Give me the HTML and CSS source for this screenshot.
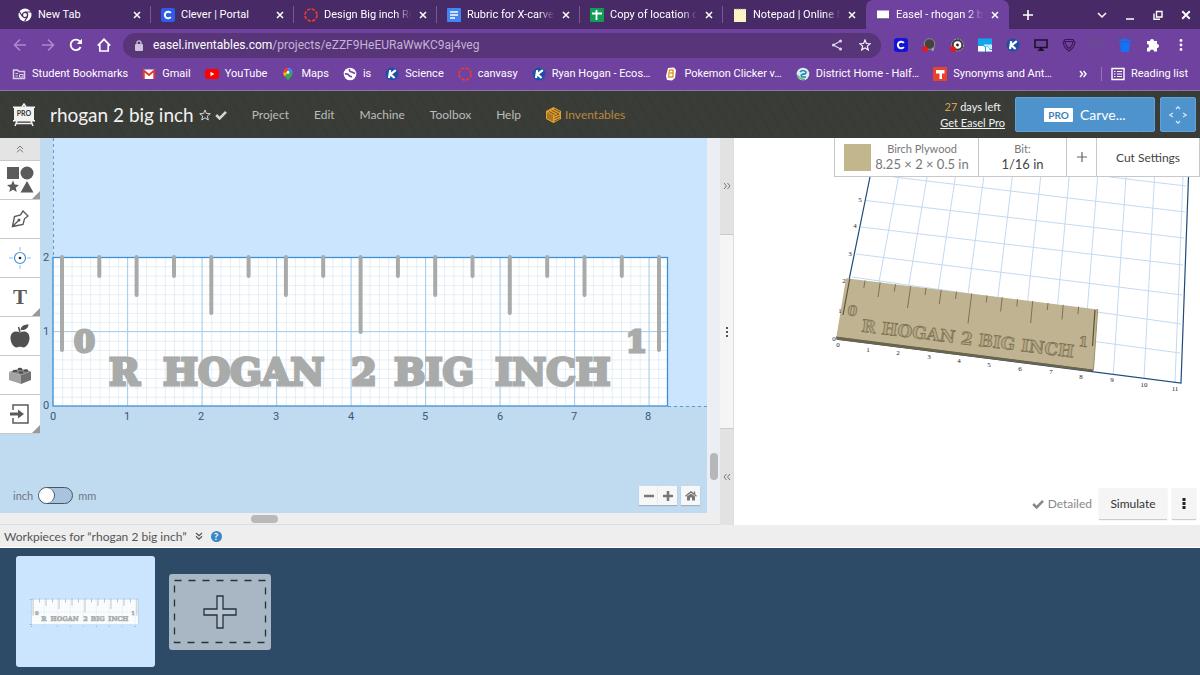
FILE: index.html
```html
<!DOCTYPE html>
<html lang="en">
<head>
    <meta charset="UTF-8">
    <meta name="viewport" content="width=device-width, initial-scale=1.0">
    <title>Easel - rhogan 2 big inch</title>
    <link rel="stylesheet" href="styles.css">
</head>
<body>

<!-- shared icons -->
<svg class="sprite" width="0" height="0" aria-hidden="true">
    <symbol id="i-close" viewBox="0 0 8 8"><path d="M1 1l6 6M7 1L1 7" stroke="#fff" stroke-width="1.5"/></symbol>
    <symbol id="i-k" viewBox="0 0 14 14"><circle cx="7" cy="7" r="6.5" fill="#1d4fa5"/><path d="M5.2 3.2L4 11M10.8 3.2L5.4 7.4L9.6 11" stroke="#fff" stroke-width="2.2" fill="none"/></symbol>
    <symbol id="i-canvas" viewBox="0 0 14 14"><circle cx="7" cy="7" r="6" fill="none" stroke="#e23c35" stroke-width="1.8" stroke-dasharray="3.3 1.4"/></symbol>
    <symbol id="i-c" viewBox="0 0 14 14"><rect width="14" height="14" rx="2" fill="#2f5bea"/><path d="M9.8 5A3.3 3.3 0 1 0 9.8 9" fill="none" stroke="#fff" stroke-width="2"/></symbol>
    <symbol id="i-check" viewBox="0 0 12 10"><path d="M1.2 5L4.6 8.4L11 1.8" fill="none" stroke="currentColor" stroke-width="2.6"/></symbol>
</svg>

<header class="tabs">
    <div class="tab">
        <svg class="fav" viewBox="0 0 14 14"><circle cx="7" cy="7" r="6.5" fill="#fff"/><circle cx="7" cy="7" r="2.6" fill="#fff" stroke="#472a66" stroke-width="1.3"/><path d="M7 4H13M4.4 8.5L1.4 3.6M9.6 8.5L6.6 13.4" stroke="#472a66" stroke-width="1.1"/></svg>
        <span class="tab-title">New Tab</span>
        <button class="tab-close" aria-label="Close"><svg><use href="#i-close"/></svg></button>
    </div>
    <div class="tab">
        <svg class="fav"><use href="#i-c"/></svg>
        <span class="tab-title">Clever | Portal</span>
        <button class="tab-close" aria-label="Close"><svg><use href="#i-close"/></svg></button>
    </div>
    <div class="tab">
        <svg class="fav"><use href="#i-canvas"/></svg>
        <span class="tab-title">Design Big inch Ru</span>
        <button class="tab-close" aria-label="Close"><svg><use href="#i-close"/></svg></button>
    </div>
    <div class="tab">
        <svg class="fav" viewBox="0 0 14 14"><rect width="14" height="14" rx="1" fill="#4285f4"/><path d="M3 4H11M3 7H11M3 10H8" stroke="#fff" stroke-width="1.5"/></svg>
        <span class="tab-title">Rubric for X-carve</span>
        <button class="tab-close" aria-label="Close"><svg><use href="#i-close"/></svg></button>
    </div>
    <div class="tab">
        <svg class="fav" viewBox="0 0 14 14"><rect width="14" height="14" rx="1" fill="#109d58"/><path d="M2 5.5H12M6.5 2V12" stroke="#fff" stroke-width="1.8"/></svg>
        <span class="tab-title">Copy of location o</span>
        <button class="tab-close" aria-label="Close"><svg><use href="#i-close"/></svg></button>
    </div>
    <div class="tab">
        <svg class="fav" viewBox="0 0 14 14"><rect x="1" y="1" width="12" height="13" fill="#fbf3c4"/><path d="M1 1H13" stroke="#8d8672" stroke-dasharray="1 1"/></svg>
        <span class="tab-title">Notepad | Online N</span>
        <button class="tab-close" aria-label="Close"><svg><use href="#i-close"/></svg></button>
    </div>
    <div class="tab active">
        <svg class="fav" viewBox="0 0 14 14"><path d="M1 2.5H13V10.5H1Z" fill="#fff"/><path d="M1 11H13" stroke="#55505a"/></svg>
        <span class="tab-title">Easel - rhogan 2 b</span>
        <button class="tab-close" aria-label="Close"><svg><use href="#i-close"/></svg></button>
    </div>
    <button class="new-tab" aria-label="New tab"><svg width="12" height="12" viewBox="0 0 12 12"><path d="M6 1V11M1 6H11" stroke="#fff" stroke-width="1.6"/></svg></button>
    <div class="window-buttons">
        <button aria-label="Search tabs"><svg width="10" height="10" viewBox="0 0 10 10"><path d="M1 3L5 7L9 3" fill="none" stroke="#fff" stroke-width="1.5"/></svg></button>
        <button aria-label="Minimize"><svg width="10" height="10" viewBox="0 0 10 10"><path d="M1 9H9" stroke="#fff" stroke-width="1.5"/></svg></button>
        <button aria-label="Restore"><svg width="10" height="10" viewBox="0 0 10 10"><path d="M3.5 1.5H9V7H3.5ZM1 3.5V9.3H7" fill="none" stroke="#fff" stroke-width="1.4"/></svg></button>
        <button aria-label="Close window"><svg width="10" height="10"><use href="#i-close"/></svg></button>
    </div>
</header>

<div class="toolbar">
    <button aria-label="Back"><svg width="14" height="14" viewBox="0 0 14 14"><path d="M13 7H2M7 1.5L1.5 7L7 12.5" fill="none" stroke="#ab8bcb" stroke-width="1.5"/></svg></button>
    <button aria-label="Forward"><svg width="14" height="14" viewBox="0 0 14 14"><path d="M1 7H12M7 1.5L12.5 7L7 12.5" fill="none" stroke="#ab8bcb" stroke-width="1.5"/></svg></button>
    <button aria-label="Reload"><svg width="14" height="14" viewBox="0 0 14 14"><path d="M11.6 9A5.2 5.2 0 1 1 10.8 3.4" fill="none" stroke="#fff" stroke-width="1.8"/><path d="M13 .8V6H7.8Z" fill="#fff"/></svg></button>
    <button aria-label="Home"><svg width="14" height="14" viewBox="0 0 14 14"><path d="M.8 7.6L7 1.3L13.2 7.6M2.8 6.5V13H11.2V6.5" fill="none" stroke="#fff" stroke-width="1.7"/></svg></button>
    <div class="omnibox">
        <svg width="8" height="11" viewBox="0 0 8 11"><rect y="4" width="8" height="7" rx="1" fill="#cfc3dc"/><path d="M2 4V2.8A2 2 0 0 1 6 2.8V4" fill="none" stroke="#cfc3dc" stroke-width="1.3"/></svg>
        <span class="url">easel.inventables.com<span class="path">/projects/eZZF9HeEURaWwKC9aj4veg</span></span>
        <button aria-label="Share"><svg width="12" height="12" viewBox="0 0 12 12"><path d="M9.5 2L2.5 6L9.5 10" fill="none" stroke="#e2d8ec" stroke-width="1.2"/><circle cx="9.5" cy="2" r="1.5" fill="#e2d8ec"/><circle cx="2.5" cy="6" r="1.5" fill="#e2d8ec"/><circle cx="9.5" cy="10" r="1.5" fill="#e2d8ec"/></svg></button>
        <button aria-label="Bookmark"><svg width="12" height="12" viewBox="0 0 12 12"><path d="M6 1L7.4 4.5L11.3 4.7L8.3 7.1L9.3 11L6 8.8L2.7 11L3.7 7.1L.7 4.7L4.6 4.5Z" fill="none" stroke="#fff" stroke-width="1.1"/></svg></button>
    </div>
    <div class="extensions">
        <svg width="14" height="14" viewBox="0 0 14 14"><rect width="14" height="14" rx="3" fill="#1414d8"/><path d="M9.8 5A3.3 3.3 0 1 0 9.8 9" fill="none" stroke="#fff" stroke-width="2"/></svg>
        <svg width="14" height="14" viewBox="0 0 14 14"><path d="M8 10L11 13.5L12.500 9Z" fill="#b5b1ae"/><circle cx="7.500" cy="6" r="5.3" fill="#45433f" stroke="#8d8a86"/><circle cx="3" cy="11" r="2.8" fill="#f01414"/></svg>
        <svg width="14" height="14" viewBox="0 0 14 14"><circle cx="7.5" cy="7" r="6" fill="#3d3b40" stroke="#aaa59a" stroke-dasharray="2 1"/><circle cx="7.5" cy="7" r="3.8" fill="#fff"/><circle cx="7.5" cy="7" r="1.4" fill="#222"/><circle cx="3" cy="11" r="2.8" fill="#f01414"/></svg>
        <svg width="14" height="14" viewBox="0 0 14 14"><path d="M0 .5H14V13.500H0Z" fill="#12a5ee"/><path d="M0 8H5.5L7 9.500V13.500H0ZM8 9H10L12 12H14V13.500H8Z" fill="#fff"/><path d="M5.5 6.500H14V11H12L10 8.500H7Z" fill="#c9ecfd"/></svg>
        <svg width="14" height="14"><use href="#i-k"/></svg>
        <svg width="14" height="14" viewBox="0 0 14 14"><path d="M1 2H13V9.5H1Z" fill="none" stroke="#1d1126" stroke-width="1.6"/><path d="M5.500 9.500H8.500V11.500H10V13H4V11.500H5.500Z" fill="#1d1126"/></svg>
        <svg width="14" height="14" viewBox="0 0 14 14"><path d="M3 1.5H11L13 4.5Q12 10 7 13Q2 10 1 4.5ZM3 3.5H11Q10.5 8 7 10.5Q3.500 8 3 3.5Z" fill="none" stroke="#35184f" stroke-width="1.1"/></svg>
        <svg width="14" height="14" viewBox="0 0 14 14"><path d="M3 1.5H11L13 4.5Q12 10 7 13Q2 10 1 4.5ZM3 3.5H11Q10.5 8 7 10.5Q3.500 8 3 3.5Z" fill="none" stroke="#615384" stroke-width=".9"/></svg>
        <svg width="14" height="14" viewBox="0 0 14 14"><path d="M1 1.5H5V.5H9V1.5H13V3.5H1ZM2 4.500H12L11 14H3Z" fill="#1173f5"/></svg>
        <svg width="14" height="14" viewBox="0 0 14 14"><path d="M1 3H4A2 2 0 1 1 8 3H11V6A2 2 0 1 1 11 10V13.5H8A2 2 0 0 0 4 13.5H1V10A2 2 0 0 0 1 6Z" fill="#fff"/></svg>
        <svg width="14" height="14" viewBox="0 0 14 14"><circle cx="7" cy="2.5" r="1.4" fill="#fff"/><circle cx="7" cy="7" r="1.4" fill="#fff"/><circle cx="7" cy="11.5" r="1.4" fill="#fff"/></svg>
    </div>
</div>

<nav class="bookmarks">
    <a href="#"><svg viewBox="0 0 14 14"><path d="M1.5 3H5.5L7 4.5H12.5V11.5H1.5Z" fill="none" stroke="#d9cfe3" stroke-width="1.5"/><path d="M3.5 6.5H6M3.5 9H6M7.5 7.5H11V10H7.5Z" stroke="#d9cfe3" fill="none"/></svg>Student Bookmarks</a>
    <a href="#"><svg viewBox="0 0 14 14"><path d="M1 2.5H13V12H1Z" fill="#fff"/><path d="M1.8 12V3.5L7 8L12.2 3.5V12" fill="none" stroke="#df3b30" stroke-width="1.9"/></svg>Gmail</a>
    <a href="#"><svg viewBox="0 0 14 14"><rect y="2" width="14" height="10" rx="2.5" fill="#f00"/><path d="M5.5 4.8L9.3 7L5.5 9.2Z" fill="#fff"/></svg>YouTube</a>
    <a href="#"><svg viewBox="0 0 14 14"><path d="M7 .8A4.8 4.8 0 0 0 2.2 5.5L7 5.5Z" fill="#ea4335"/><path d="M7 .8A4.8 4.8 0 0 1 11.8 5.5H7Z" fill="#4285f4"/><path d="M2.2 5.5H7L4 9.8Q2.2 7.5 2.2 5.5Z" fill="#fbbc04"/><path d="M7 5.5H11.8Q11.8 8.5 7 13.3L4 9.8Z" fill="#34a853"/><circle cx="7" cy="5.4" r="1.4" fill="#fff"/></svg>Maps</a>
    <a href="#"><svg viewBox="0 0 14 14"><circle cx="7" cy="7" r="6.3" fill="#fff"/><path d="M2 7Q5 6.500 6 8.5Q7 10 9 9.500M6.500 2Q6 5 9 5L12 6.500" fill="none" stroke="#6f42a0" stroke-width="1.6"/></svg>is</a>
    <a href="#"><svg><use href="#i-k"/></svg>Science</a>
    <a href="#"><svg><use href="#i-canvas"/></svg>canvasy</a>
    <a href="#"><svg><use href="#i-k"/></svg>Ryan Hogan - Ecos…</a>
    <a href="#"><svg viewBox="0 0 14 14"><path d="M4 1L10 .5L12 3L11 11L8 13.5L3 13L2 9Z" fill="#fff"/><path d="M5 3H9V6H6M9 6V10H4.500L5.500 3" fill="none" stroke="#e89a2c" stroke-width="1.5"/></svg>Pokemon Clicker v…</a>
    <a href="#"><svg viewBox="0 0 14 14"><circle cx="7" cy="7" r="6.3" fill="#d8f0ee"/><path d="M4 5Q7 2 10 5Q10 7.5 7 7Q4 8 6 10H10" fill="none" stroke="#2480b8" stroke-width="1.6"/><path d="M1.500 8Q4 13 9 12.500" stroke="#5cb85c" stroke-width="1.5" fill="none"/></svg>District Home - Half…</a>
    <a href="#"><svg viewBox="0 0 14 14"><rect width="14" height="14" fill="#e8432a"/><path d="M3 3H11.5V6.5H9V12H6.5V6.5H3Z" fill="#fff"/></svg>Synonyms and Ant…</a>
    <button class="more" aria-label="More bookmarks"><svg width="8" height="8" viewBox="0 0 8 8"><path d="M1 1L3.5 4L1 7M4.5 1L7 4L4.5 7" fill="none" stroke="#fff" stroke-width="1.4"/></svg></button>
    <a class="reading" href="#"><svg viewBox="0 0 14 14"><path d="M1 1.5H13V12.5H1Z" fill="none" stroke="#fff" stroke-width="1.4"/><path d="M3 4.5H4.5M3 7H4.5M3 9.5H4.5M6 4.5H11M6 7H11M6 9.5H11" stroke="#fff" stroke-width="1.2"/></svg>Reading list</a>
</nav>

<header class="easel-header">
    <svg class="logo" width="24" height="24" viewBox="0 0 24 24"><path d="M10 4L12 1L14 4M5 18L3 23M19 18L21 23M4 20.5H20" fill="none" stroke="#f2f2f2" stroke-width="1.5"/><path d="M1 3.5H23V5H22V17H23V18.5H1V17H2V5H1Z" fill="#f2f2f2"/><text x="12" y="13" text-anchor="middle" class="logo-text">PRO</text></svg>
    <h1>rhogan 2 big inch</h1>
    <div class="title-icons">
        <svg width="12" height="12" viewBox="0 0 12 12"><path d="M6 1L7.4 4.5L11.3 4.7L8.3 7.1L9.3 11L6 8.8L2.7 11L3.7 7.1L.7 4.7L4.6 4.5Z" fill="none" stroke="#d5d5d5"/></svg>
        <svg width="12" height="10"><use href="#i-check"/></svg>
    </div>
    <nav class="menu">
        <a href="#">Project</a>
        <a href="#">Edit</a>
        <a href="#">Machine</a>
        <a href="#">Toolbox</a>
        <a href="#">Help</a>
        <a href="#" class="brand"><svg width="15" height="16" viewBox="0 0 15 16"><path d="M7.5 0L15 4V12L7.5 16L0 12V4Z" fill="#e5a02c"/><path d="M2 5.500V12M4 6.500V13M6 7.500V14M3 4.500L9 7.500M5.500 3.200L13 7M8 2L14 5M8.500 9L13 7M8.500 11.500L14 9M8.500 14L14 11.500" stroke="#5e4820" stroke-width=".9"/></svg>Inventables</a>
    </nav>
    <div class="trial">
        <span><b>27</b> days left</span>
        <a href="#">Get Easel Pro</a>
    </div>
    <button class="carve"><span class="pro">PRO</span>Carve...</button>
    <button class="jog" aria-label="Jog machine"><svg width="18" height="18" viewBox="0 0 18 18"><path d="M7 3L9 .8L11 3M7 15L9 17.2L11 15M4 7L.8 9L4 11M14 7L17.2 9L14 11" fill="none" stroke="#d3e7f8" stroke-width="1.2"/></svg></button>
</header>

<main class="workspace">
    <section class="editor">
        <div class="canvas">
            <svg class="drawing" width="100%" height="100%">
                <defs>
                    <pattern id="minor" x="53" y="257" width="9.3125" height="9.3125" patternUnits="userSpaceOnUse"><path d="M0 0H9.3125M0 0V9.3125" stroke="#c9e0f0" fill="none"/></pattern>
                    <g id="board">
                        <rect x="53" y="257" width="615" height="149" fill="#fff"/>
                        <rect x="53" y="257" width="615" height="149" fill="url(#minor)"/>
                        <path d="M127.5 257V406M202 257V406M276.5 257V406M351 257V406M425.5 257V406M500 257V406M574.5 257V406M649 257V406M53 331.5H668" stroke="#a9d0ee"/>
                        <rect x="53" y="257.5" width="614.5" height="148.5" fill="none" stroke="#3f8fd6" stroke-width="1.3"/>
                        <path class="cuts" d="M62 257V350M99.3 257V276M136.6 257V295M174 257V276M211.3 257V313M248.6 257V276M285.9 257V295M323.2 257V276M360.6 257V332M397.9 257V276M435.2 257V295M472.5 257V276M509.8 257V313M547.2 257V276M584.5 257V295M621.8 257V276M659 257V350"/>
                        <g class="engraved">
                            <text x="74" y="352">0</text>
                            <text x="626" y="352">1</text>
                            <text x="109" y="385">R</text>
                            <text x="163" y="385">HOGAN</text>
                            <text x="351" y="385">2</text>
                            <text x="394" y="385">BIG</text>
                            <text x="495" y="385">INCH</text>
                        </g>
                        <g class="axis">
                            <text x="53" y="420">0</text><text x="127" y="420">1</text><text x="201" y="420">2</text>
                            <text x="276" y="420">3</text><text x="351" y="420">4</text><text x="425" y="420">5</text>
                            <text x="500" y="420">6</text><text x="574" y="420">7</text><text x="648" y="420">8</text>
                            <text x="46" y="261">2</text><text x="46" y="335">1</text><text x="46" y="409">0</text>
                        </g>
                    </g>
                </defs>
                <g class="shift">
                    <path d="M0 0H53V406H2000V900H0Z" fill="#c0daf0"/>
                    <path d="M53.5 138V257M668 406.5H2000" stroke="#5d9bd0" stroke-dasharray="3 3"/>
                    <use href="#board"/>
                </g>
            </svg>
            <div class="tools">
                <button class="collapse" aria-label="Collapse"><svg width="8" height="8" viewBox="0 0 8 8"><path d="M1 4L4 1L7 4M1 7.3L4 4.3L7 7.3" fill="none" stroke="#777"/></svg></button>
                <button class="flyout" aria-label="Shapes"><svg width="28" height="28" viewBox="0 0 28 28"><path d="M1 1H13V13H1Z" fill="#5b5b5b"/><circle cx="21" cy="7" r="6.5" fill="#5b5b5b"/><path d="M7 14.5L8.7 18.6L13 19L9.7 21.8L10.8 26L7 23.7L3.2 26L4.3 21.8L1 19L5.3 18.6Z" fill="#5b5b5b"/><path d="M21 15L27.5 26.5H14.5Z" fill="#5b5b5b"/></svg></button>
                <button aria-label="Pen"><svg width="18" height="18" viewBox="0 0 18 18"><path d="M1.5 16.5L3.5 6.5L9.5 4.8L12 1L17 6L13.5 8.8L12 14.5ZM1.5 16.5L7.5 10.5" fill="none" stroke="#5b5b5b" stroke-width="1.4"/><circle cx="8" cy="10" r="1.5" fill="#5b5b5b"/></svg></button>
                <button aria-label="Drill point"><svg width="22" height="22" viewBox="0 0 22 22"><circle cx="11" cy="11" r="5.5" fill="none" stroke="#4a90d9" stroke-width="1.2"/><path d="M11 0V4M11 18V22M0 11H4M18 11H22" stroke="#8fc0ea"/><circle cx="11" cy="11" r="1.3" fill="#222"/></svg></button>
                <button class="flyout letter" aria-label="Text">T</button>
                <button aria-label="Icons"><svg width="20" height="24" viewBox="0 0 20 24"><path d="M10 8.5C13 6.5 19.5 7 19.5 14C19.5 19 16 23.5 13.5 23.5C12 23.5 11.5 22.8 10 22.8C8.5 22.8 8 23.5 6.5 23.5C4 23.5 .5 19 .5 14C.5 7 7 6.5 10 8.5Z" fill="#505050"/><path d="M10 8L8.5 3" stroke="#505050" stroke-width="1.5"/><path d="M10.5 6C11 2 14 .5 18.5 .5C18.5 4 15 6.5 10.5 6Z" fill="#505050"/></svg></button>
                <button aria-label="Apps"><svg width="22" height="17" viewBox="0 0 22 17"><path d="M0 5L11 1.5L22 4.5L12 8Z" fill="#888"/><path d="M0 5L12 8V17L0 13Z" fill="#a3a3a3"/><path d="M12 8L22 4.5V13L12 17Z" fill="#707070"/><g fill="#505050"><ellipse cx="6" cy="4" rx="2.3" ry="1.2"/><ellipse cx="11" cy="2" rx="2.3" ry="1.2"/><ellipse cx="12" cy="5.5" rx="2.3" ry="1.2"/><ellipse cx="17" cy="3.5" rx="2.3" ry="1.2"/></g></svg></button>
                <button class="flyout" aria-label="Import"><svg width="20" height="20" viewBox="0 0 20 20"><path d="M3 6V1H18V19H3V14" fill="none" stroke="#5b5b5b" stroke-width="1.5"/><path d="M0 8.5H8V5.5L14 10L8 14.5V11.5H0Z" fill="#5b5b5b"/></svg></button>
            </div>
            <div class="canvas-foot">
                <label class="units">inch <input type="checkbox"> mm</label>
                <div class="zoom">
                    <div class="zoom-group">
                        <button aria-label="Zoom out"><svg width="10" height="10" viewBox="0 0 10 10"><path d="M0 5H10" stroke="#777" stroke-width="2.5"/></svg></button>
                        <button aria-label="Zoom in"><svg width="10" height="10" viewBox="0 0 10 10"><path d="M0 5H10M5 0V10" stroke="#777" stroke-width="2.5"/></svg></button>
                    </div>
                    <button aria-label="Home view"><svg width="12" height="10" viewBox="0 0 12 10"><path d="M.5 5.2L6 .8L11.5 5.2M9.500 .5V3.500" fill="none" stroke="#777" stroke-width="1.4"/><path d="M2 5.5L6 2.5L10 5.5V9.5H7V6.5H5V9.5H2Z" fill="#777"/></svg></button>
                </div>
            </div>
        </div>
        <div class="scroll-y"><i></i></div>
        <div class="scroll-x"><i></i></div>
    </section>

    <div class="splitter">
        <button aria-label="Expand editor"><svg width="8" height="8" viewBox="0 0 8 8"><path d="M1 1L3.5 4L1 7M4.5 1L7 4L4.5 7" fill="none" stroke="#777"/></svg></button>
        <div class="grip"><svg width="4" height="10" viewBox="0 0 4 10"><path d="M1 0H3V2H1ZM1 4H3V6H1ZM1 8H3V10H1Z" fill="#555"/></svg></div>
        <button aria-label="Expand preview"><svg width="8" height="8" viewBox="0 0 8 8"><path d="M3.5 1L1 4L3.5 7M7 1L4.5 4L7 7" fill="none" stroke="#777"/></svg></button>
    </div>

    <section class="preview">
        <div class="settings">
            <button class="material"><span class="swatch"></span><span class="stack"><small>Birch Plywood</small>8.25 × 2 × 0.5 in</span></button>
            <button class="bit stack"><small>Bit:</small>1/16 in</button>
            <button class="add" aria-label="Add bit"><svg width="12" height="12" viewBox="0 0 12 12"><path d="M6 1V11M1 6H11" stroke="#666" stroke-width="1.2"/></svg></button>
            <button class="cut">Cut Settings</button>
        </div>
        <svg class="scene" viewBox="734 177 466 311" preserveAspectRatio="xMinYMin meet">
            <g stroke="#c3daf2" fill="none">
                <path d="M852 277L1181 324M846 308L1180 353M856 254L1182 295M861 227L1183 265M865.5 200.5L1184 238M894 177L1185 212M1110 177L1186 186"/>
                <path d="M867.7 343L898.5 177M898.4 347L927 177M929 351L955.4 177M959.8 355L983.8 177M990.5 359L1012.3 177M1021.2 363L1040.7 177M1052 367L1069.2 177M1082.6 370L1097.6 177M1113.3 374L1126 177M1144 378L1154.5 177M1175 382L1183 177"/>
            </g>
            <path d="M870 177L837 339L1181 383L1188.5 177" fill="none" stroke="#1f4a7a" stroke-width="1.2"/>
            <path d="M836.5 336L1093.5 369V371L1090 371.5L838 340L836 338.5Z" fill="#6b644c"/>
            <path d="M846 278.3L1097.7 309.5L1093.5 369.5L836.5 336.5Z" fill="#bfb392"/>
            <path d="M1096.5 309.5L1097.7 309.5L1093.5 369.5" fill="none" stroke="#9b8f6d"/>
            <path d="M865 280.6L863.8 288M880.2 282.5L878 297M895.5 284.3L894.3 291.5M910.7 286.2L907.5 308M926 288L925 295M941.2 289.9L939.3 304M956.5 291.8L955.5 299M971.7 293.6L968 323.5M987 295.5L986.2 302.5M1002.2 297.3L1000.6 311.5M1017.5 299.2L1016.8 306.5M1032.7 301L1030.7 323M1048 303L1047.3 310M1063.2 304.8L1062 319.5M1078.5 306.6L1078 314" stroke="#7c7257"/>
            <path d="M849.7 279L843 315M1095 310L1092.5 346" stroke="#5b5439" stroke-width="1.2"/>
            <g class="carved">
                <text transform="translate(847 315) rotate(7)" class="digit">0</text>
                <text transform="translate(1078 346) rotate(7)" class="digit">1</text>
                <text transform="translate(861 331.5) rotate(7)">R HOGAN 2 BIG INCH</text>
            </g>
            <g class="ticks">
                <text x="838" y="347">0</text><text x="868" y="352">1</text><text x="898" y="355">2</text><text x="929" y="359">3</text>
                <text x="959" y="363">4</text><text x="989" y="367">5</text><text x="1020" y="371">6</text><text x="1051" y="374">7</text>
                <text x="1081" y="379">8</text><text x="1112" y="382">9</text><text x="1144" y="387">10</text><text x="1175" y="391">11</text>
                <text x="834" y="341">0</text><text x="840" y="313">1</text><text x="844" y="283">2</text><text x="850" y="256">3</text>
                <text x="855" y="228">4</text><text x="860" y="202">5</text>
            </g>
        </svg>
        <div class="preview-foot">
            <span class="detailed"><svg width="12" height="10"><use href="#i-check"/></svg>Detailed</span>
            <button class="simulate">Simulate</button>
            <button class="kebab" aria-label="More"><svg width="4" height="11" viewBox="0 0 4 11"><path d="M.5 0H3.500V3H.5ZM.5 4H3.500V7H.5ZM.5 8H3.500V11H.5Z" fill="#222"/></svg></button>
        </div>
    </section>
</main>

<div class="workpieces-bar">
    Workpieces for “rhogan 2 big inch”
    <svg width="8" height="8" viewBox="0 0 8 8"><path d="M1 1L4 3.8L7 1M1 4.3L4 7.1L7 4.3" fill="none" stroke="#555" stroke-width="1.2"/></svg>
    <button class="help" aria-label="Help">?</button>
</div>

<footer class="tray">
    <button class="piece" aria-label="Workpiece 1"><svg viewBox="-36 10 799 638" width="139" height="111"><use href="#board"/></svg></button>
    <button class="new-piece" aria-label="Add workpiece"><svg width="102" height="76" viewBox="0 0 102 76"><rect x="5.5" y="6.5" width="91" height="62" fill="none" stroke="#24323f" stroke-width="1.3" stroke-dasharray="7 7"/><path d="M48 22H54V35H67V41H54V54H48V41H35V35H48Z" fill="#b9c3cd" stroke="#24323f" stroke-width="1.3"/></svg></button>
</footer>

</body>
</html>
```

FILE: styles.css
```css
* {
    box-sizing: border-box;
}

body {
    margin: 0;
    height: 100vh;
    display: flex;
    flex-direction: column;
    overflow: hidden;
    font-family: Lato, sans-serif;
    background: #2d4b66;
}

button {
    border: none;
    background: none;
    padding: 0;
    font-family: inherit;
    display: flex;
    align-items: center;
    justify-content: center;
    cursor: pointer;
}

a {
    color: inherit;
    text-decoration: none;
}

svg {
    flex: none;
    display: block;
}

.sprite {
    position: absolute;
}

/* browser */
.tabs {
    flex: none;
    display: flex;
    height: 29px;
    padding-left: 8px;
    background: #472a66;
    color: #fff;
    font: 11px Roboto, sans-serif;
}

.tab {
    flex: 0 1 143px;
    min-width: 0;
    display: flex;
    align-items: center;
    padding: 0 10px;
    position: relative;
}

.tab::after {
    content: "";
    position: absolute;
    right: 0;
    top: 6px;
    height: 17px;
    border-right: 1px solid #77569a;
}

.tab:nth-child(6)::after,
.tab.active::after {
    display: none;
}

.tab.active {
    background: #6f42a0;
    border-radius: 7px 7px 0 0;
}

.fav {
    width: 14px;
    height: 14px;
    margin-right: 6px;
}

.tab-title {
    flex: 1;
    white-space: nowrap;
    -webkit-mask-image: linear-gradient(to right, #000 75%, transparent 92%);
    mask-image: linear-gradient(to right, #000 75%, transparent 92%);
}

.tab:nth-child(-n+2) .tab-title {
    -webkit-mask-image: none;
    mask-image: none;
}

.tab-close svg {
    width: 8px;
    height: 8px;
}

.new-tab {
    margin-left: 13px;
}

.window-buttons {
    margin-left: auto;
    display: flex;
    gap: 18px;
    padding-right: 9px;
}

.toolbar {
    flex: none;
    display: flex;
    align-items: center;
    gap: 14px;
    height: 32px;
    padding: 0 12px 0 13px;
    background: #6f42a0;
}

.omnibox {
    flex: 1;
    display: flex;
    align-items: center;
    gap: 16px;
    height: 25px;
    margin: 0 -1px 0 -2px;
    padding: 0 10px 0 12px;
    border-radius: 13px;
    background: #573578;
    color: #fff;
    font: 12px Roboto, sans-serif;
}

.url {
    flex: 1;
    margin-left: -6px;
}

.path {
    color: #c5b2d8;
}

.extensions {
    display: flex;
    gap: 14px;
}

.bookmarks {
    flex: none;
    display: flex;
    align-items: center;
    gap: 14px;
    height: 30px;
    padding: 0 12px 4px;
    border-bottom: 1px solid #8a78a0;
    background: #6f42a0;
    color: #fff;
    font: 11px Roboto, sans-serif;
    white-space: nowrap;
}

.bookmarks a {
    display: flex;
    align-items: center;
    gap: 6px;
}

.bookmarks a svg {
    width: 14px;
    height: 14px;
}

.bookmarks .more {
    margin-left: auto;
}

.bookmarks .reading {
    padding-left: 9px;
    border-left: 1px solid #9573b8;
}

/* easel header */
.easel-header {
    flex: none;
    display: flex;
    align-items: center;
    height: 47px;
    padding: 0 4px 0 12px;
    color: #f2f2f2;
    background: #3a3c38 repeating-linear-gradient(60deg, transparent 0 9px, #383a36 9px 11px);
}

.logo-text {
    font: bold 7px Lato, sans-serif;
    fill: #333;
}

.easel-header h1 {
    margin: 0 5px 0 14px;
    font-size: 19px;
    font-weight: normal;
    white-space: nowrap;
}

.title-icons {
    display: flex;
    align-items: center;
    gap: 4px;
    color: #d5d5d5;
}

.menu {
    display: flex;
    gap: 25px;
    margin-left: 25px;
    font-size: 12px;
    color: #bcbdba;
}

.menu .brand {
    display: flex;
    gap: 4px;
    color: #b8893e;
}

.trial {
    display: flex;
    flex-direction: column;
    align-items: center;
    margin-left: auto;
    margin-right: 10px;
    font-size: 11px;
    line-height: 16px;
}

.trial a {
    text-decoration: underline;
}

.trial b {
    color: #d9a14a;
    font-weight: normal;
}

.carve,
.jog {
    height: 35px;
    border: 1px solid #5fa3dc;
    border-radius: 2px;
    background: #4f93cc;
    color: #fff;
}

.carve {
    width: 140px;
    gap: 7px;
    margin-right: 5px;
    font-size: 14px;
}

.pro {
    padding: 0 4px;
    border-radius: 1px;
    background: #fff;
    color: #3f7fb5;
    font-size: 10px;
    font-weight: bold;
    line-height: 14px;
}

.jog {
    width: 36px;
}

/* workspace */
.workspace {
    flex: 1;
    min-height: 0;
    display: flex;
}

.editor {
    flex: 0 0 60%;
    display: grid;
    grid-template-columns: 1fr 13px;
    grid-template-rows: 1fr 12px;
    background: #ebeff3;
}

.canvas {
    position: relative;
    display: flex;
    flex-direction: column;
    justify-content: flex-end;
    overflow: hidden;
    background: #cbe5fe;
}

.drawing {
    position: absolute;
    top: 0;
    left: 0;
}

.shift {
    transform: translateY(-138px);
}

.cuts {
    stroke: #a9abab;
    stroke-width: 4px;
    stroke-linecap: round;
}

.engraved text {
    font: bold 37px "DejaVu Serif", serif;
    fill: #a9abab;
    stroke: #a9abab;
    stroke-width: 3px;
}

.engraved text:nth-child(-n+2) {
    font-size: 30px;
}

.axis text {
    font: 11px Roboto, sans-serif;
    fill: #35597c;
    text-anchor: middle;
}

.tools {
    position: absolute;
    top: 0;
    left: 0;
    width: 40px;
}

.tools button {
    position: relative;
    width: 100%;
    height: 39px;
    border-bottom: 1px solid #c9c9c9;
    background: #fff;
}

.tools .collapse {
    height: 23px;
    background: #e4e4e4;
}

.tools .flyout::after {
    content: "";
    position: absolute;
    right: 0;
    bottom: 0;
    border-left: 8px solid transparent;
    border-bottom: 8px solid #999;
}

.tools .letter {
    color: #5b5b5b;
    font: bold 21px "Liberation Serif", serif;
}

.canvas-foot {
    position: relative;
    display: flex;
    justify-content: space-between;
    align-items: center;
    padding: 0 7px 8px 13px;
}

.units {
    display: flex;
    align-items: center;
    gap: 5px;
    color: #6d7883;
    font-size: 11px;
}

.units input {
    appearance: none;
    width: 35px;
    height: 17px;
    margin: 0;
    border: 1px solid #445566;
    border-radius: 9px;
    background: #a8c4dd;
}

.units input::before {
    content: "";
    display: block;
    width: 15px;
    height: 15px;
    border-right: 1px solid #445566;
    border-radius: 50%;
    background: #fff;
}

.zoom {
    display: flex;
    gap: 4px;
}

.zoom button {
    width: 19px;
    height: 19px;
    background: #f7f7f7;
    box-shadow: 0 1px 1px #9fb2c4;
}

.zoom-group {
    display: flex;
}

.scroll-y,
.scroll-x {
    display: flex;
}

.scroll-y {
    justify-content: center;
    align-items: flex-end;
    padding-bottom: 33px;
}

.scroll-y i {
    width: 8px;
    height: 27px;
    border-radius: 4px;
    background: #b5b7b9;
}

.scroll-x {
    grid-column: 1 / 3;
    align-items: center;
    padding-left: 251px;
    border-bottom: 1px solid #ddd;
    background: #eeeeef;
}

.scroll-x i {
    width: 27px;
    height: 8px;
    border-radius: 4px;
    background: #b9b9b9;
}

.splitter {
    flex: 0 0 14px;
    display: flex;
    flex-direction: column;
    border-right: 1px solid #ddd;
}

.splitter button {
    flex: 1;
    background: #e2e2e2;
}

.grip {
    flex: 2;
    display: flex;
    align-items: center;
    justify-content: center;
    border: solid #ccc;
    border-width: 1px 0;
    background: #f5f5f5;
}

/* 3d preview */
.preview {
    flex: 1;
    min-width: 0;
    display: flex;
    flex-direction: column;
    background: #fff;
}

.settings {
    flex: none;
    align-self: flex-end;
    display: flex;
    height: 39px;
    border: solid #c8c8c8;
    border-width: 0 1px 1px;
    background: #fff;
}

.settings button {
    border-right: 1px solid #c8c8c8;
    color: #444;
}

.settings .cut {
    width: 102px;
    border: none;
    font-size: 12px;
}

.settings .material {
    width: 144px;
    gap: 4px;
    color: #777;
}

.swatch {
    width: 27px;
    height: 27px;
    background: #c1b68c;
}

.stack {
    display: flex;
    flex-direction: column;
    align-items: center;
    font-size: 13px;
    line-height: 17px;
}

.stack small {
    color: #777;
    font-size: 11px;
    line-height: 15px;
}

.bit {
    width: 88px;
}

.add {
    width: 30px;
}

.scene {
    flex: 1;
    width: 100%;
    min-height: 0;
}

.carved text {
    font: bold 17px "DejaVu Serif", serif;
    fill: #b3a783;
    stroke: #776d50;
    stroke-width: .7px;
}

.carved .digit {
    font-size: 14px;
}

.ticks text {
    font: 7px "Liberation Serif", serif;
    fill: #223;
    text-anchor: middle;
}

.preview-foot {
    flex: none;
    display: flex;
    justify-content: flex-end;
    align-items: center;
    gap: 5px;
    padding: 0 4px 6px;
}

.detailed {
    display: flex;
    align-items: center;
    gap: 4px;
    margin-right: 2px;
    color: #888;
    font-size: 12px;
}

.simulate,
.kebab {
    height: 31px;
    background: #f5f5f5;
    box-shadow: 0 1px 1px #ccc;
    color: #333;
    font-size: 12px;
}

.simulate {
    width: 68px;
}

.kebab {
    width: 24px;
}

/* workpieces */
.workpieces-bar {
    flex: none;
    display: flex;
    align-items: center;
    gap: 8px;
    height: 23px;
    padding-left: 4px;
    border-bottom: 1px solid #fff;
    background: #eee;
    color: #555;
    font-size: 12px;
}

.help {
    width: 11px;
    height: 11px;
    border-radius: 50%;
    background: #3a87c8;
    color: #fff;
    font-size: 10px;
    font-weight: bold;
}

.tray {
    flex: none;
    display: flex;
    align-items: center;
    gap: 14px;
    padding: 8px 16px;
    background: #2d4b66;
}

.piece {
    border-radius: 3px;
    background: #cbe5fe;
}

.new-piece {
    border-radius: 3px;
    background: #a9b6c3;
}
```
